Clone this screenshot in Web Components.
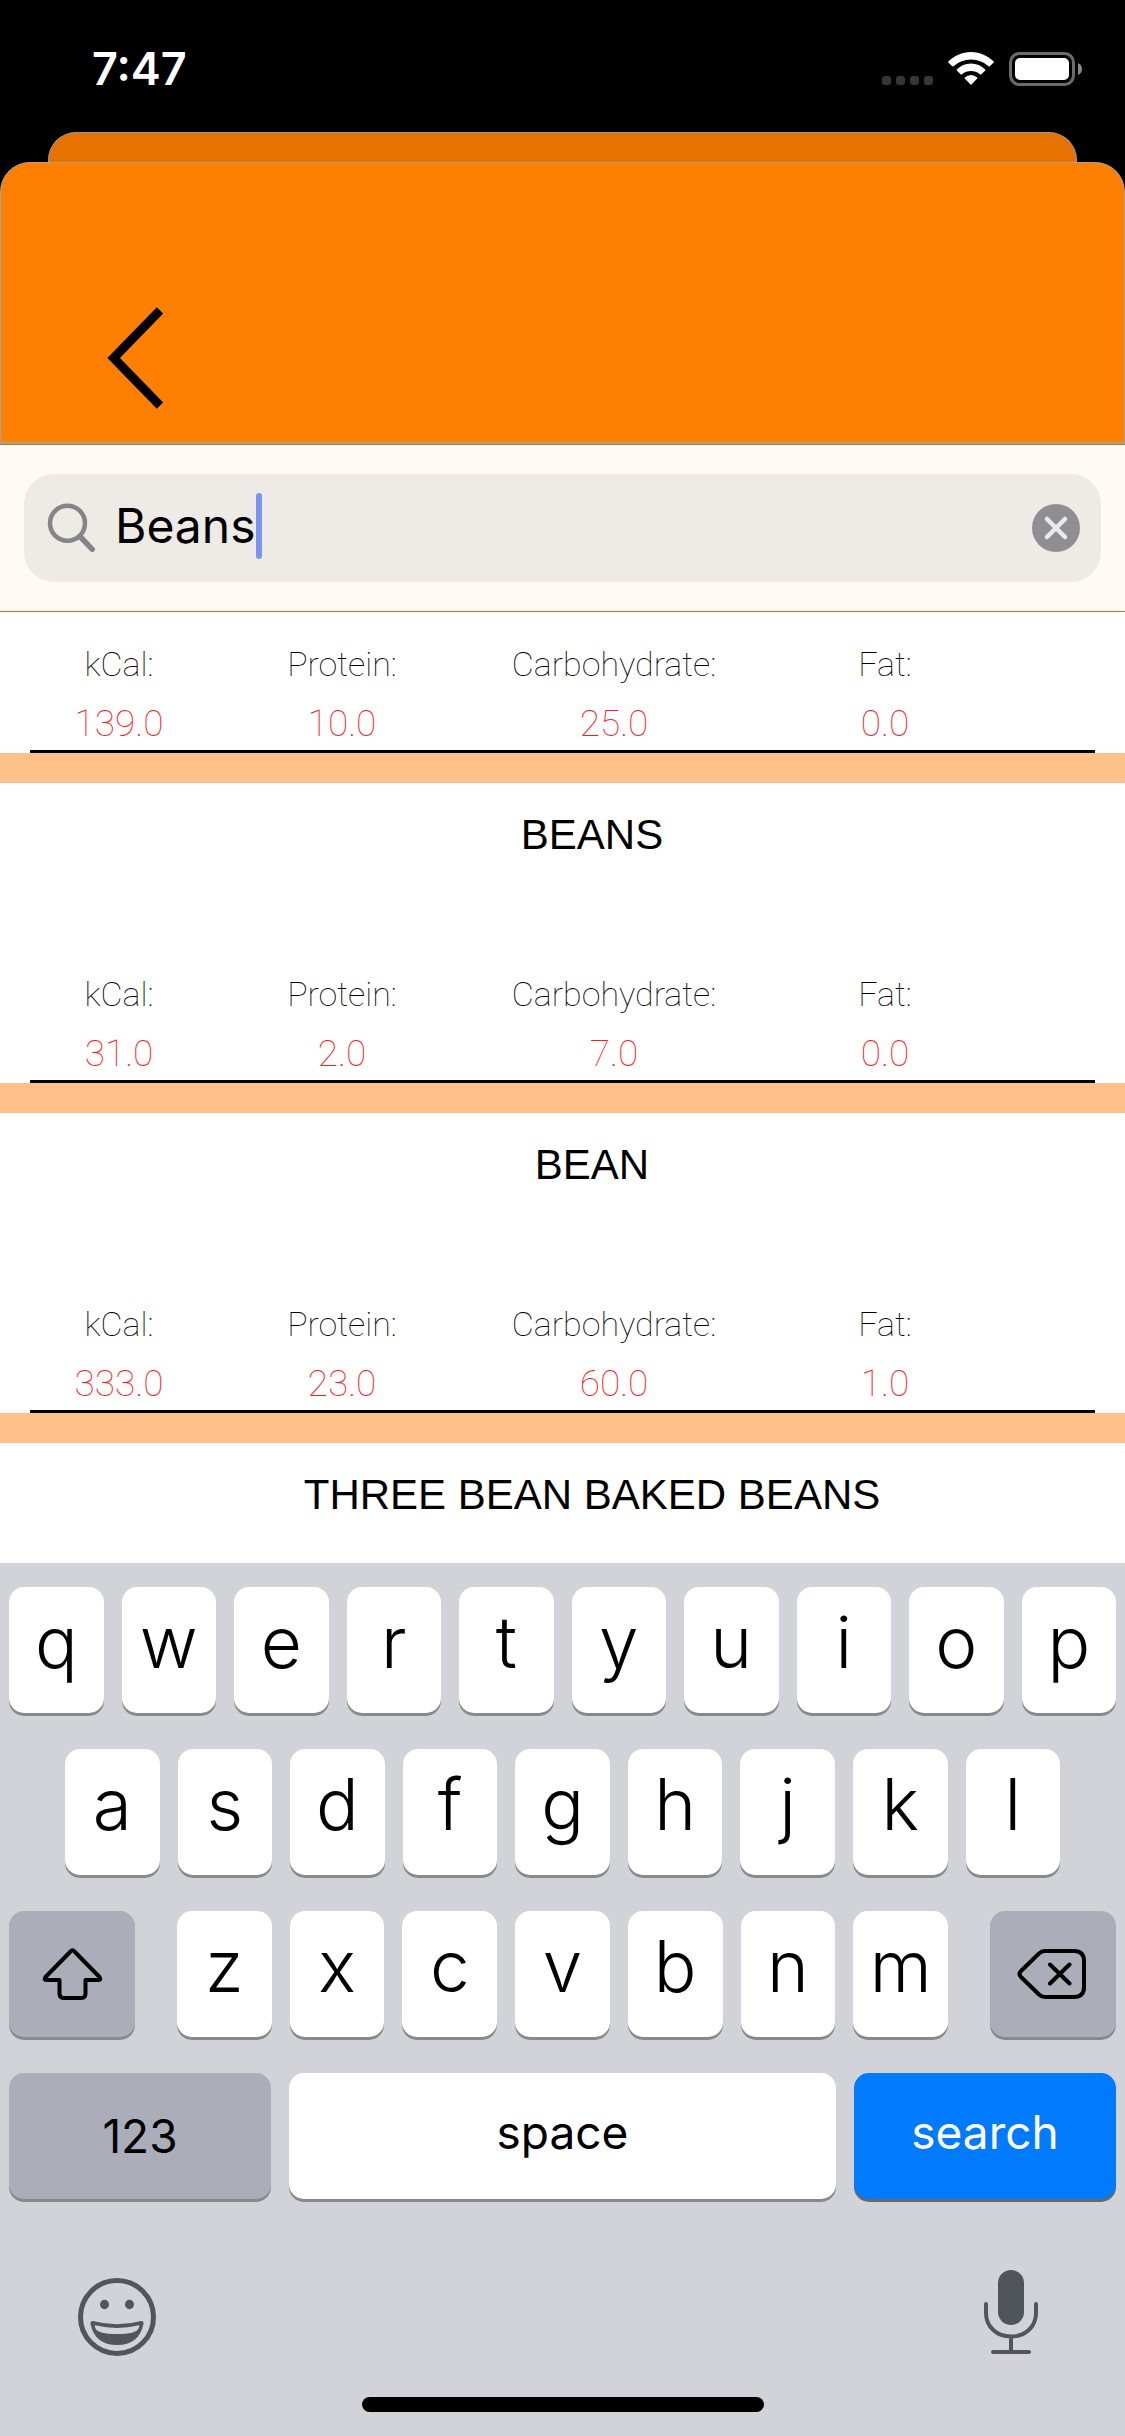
<!DOCTYPE html>
<html lang="en">
<head>
<meta charset="utf-8">
<meta name="viewport" content="width=device-width, initial-scale=1">
<title>Food search</title>
<style>
  html, body { margin: 0; }
  body { background: #000; font-family: Inter, "Liberation Sans", sans-serif; }
</style>
</head>
<body>
<food-search-app></food-search-app>
<script>
const define = (name, html, setup) => {
  const tpl = document.createElement('template');
  tpl.innerHTML = html;
  customElements.define(name, class extends HTMLElement {
    constructor() {
      super();
      this.attachShadow({ mode: 'open' });
    }
    connectedCallback() {
      if (this.shadowRoot.childNodes.length) return;
      this.shadowRoot.append(tpl.content.cloneNode(true));
      if (setup) setup(this, this.shadowRoot);
    }
  });
};

define('status-bar', `
<style>
  :host { display: flex; justify-content: space-between; align-items: center; height: 132px; padding: 6px 42px 0 92px; box-sizing: border-box; color: #fff; }
  time { font-size: 45px; line-height: 52px; font-weight: 600; }
  .icons { display: flex; align-items: center; }
  svg { display: block; }
</style>
<time>7:47</time>
<div class="icons">
  <svg width="202" height="36" viewBox="881 51 202 36" role="img" aria-label="No signal, Wi-Fi connected, battery full">
    <g fill="#363636"><rect x="882" y="76" width="9" height="9" rx="3"/><rect x="896" y="76" width="9" height="9" rx="3"/><rect x="910" y="76" width="9" height="9" rx="3"/><rect x="924" y="76" width="9" height="9" rx="3"/></g>
    <g fill="#fff">
      <path d="M971 52C962 52 954 56 948.300 61.500Q948 62 948.300 62.500L952.300 66.300Q953 66.600 953.500 66.200Q961 59.500 971 59.500T988.500 66.200Q989 66.600 989.700 66.300L993.700 62.500Q994 62 993.700 61.500C988 56 980 52 971 52Z"/>
      <path d="M971 63.500C965.500 63.500 960.500 65.700 956.800 69.500Q956.500 70 956.800 70.500L960.800 74.500Q961.500 74.800 962 74.300Q966 71 971 71T980 74.300Q980.500 74.800 981.200 74.500L985.200 70.500Q985.500 70 985.200 69.500C981.500 65.700 976.500 63.500 971 63.500Z"/>
      <path d="M971 75Q967.500 75 964.800 77.600Q964.300 78 964.800 78.600L970.500 84.600Q971 85.100 971.500 84.600L977.200 78.600Q977.700 78 977.200 77.600Q974.500 75 971 75Z"/>
    </g>
    <rect x="1010.500" y="53.500" width="63" height="31" rx="9" fill="none" stroke="#6b6b6b" stroke-width="3"/>
    <rect x="1015" y="58" width="54" height="22" rx="5" fill="#fff"/>
    <path d="M1078 63Q1082 65 1082 69T1078 75Z" fill="#8a8a8a"/>
  </svg>
</div>`);

define('sheet-header', `
<style>
  :host { display: block; }
  .behind { height: 30px; margin: 0 48px; box-sizing: border-box; background: #e67200; border: 1px solid #999; border-bottom: 0; border-radius: 28px 28px 0 0; }
  header { height: 282px; box-sizing: border-box; padding: 134px 60px 0 89px; background: #ff8000; border: 1px solid #a6a09a; border-bottom-width: 2px; border-radius: 30px 30px 0 0; }
  button { display: block; border: 0; padding: 0; background: none; }
  svg { display: block; }
</style>
<div class="behind"></div>
<header>
  <button type="button" aria-label="Back"><svg width="90" height="120" viewBox="90 297 90 120"><path d="M160 310.300L113.600 358L160 405.700" fill="none" stroke="#000" stroke-width="9"/></svg></button>
</header>`);

define('search-field', `
<style>
  :host { display: block; background: #fffaf5; border: solid #c4761c; border-width: 1px 0; padding: 29px 24px; }
  .field { display: flex; align-items: center; height: 108px; padding: 0 21px 0 23px; box-sizing: border-box; background: #eeebe6; border-radius: 30px; }
  label { display: flex; flex: 1; align-items: center; min-width: 0; }
  svg { display: block; }
  .lens { margin-right: 18px; }
  .entry { display: flex; align-items: center; padding-bottom: 4px; }
  input { field-sizing: content; border: 0; outline: 0; padding: 0; margin: 0; background: none; color: #000; font: 400 48px/60px Inter, "Liberation Sans", sans-serif; }
  .caret { width: 6px; height: 66px; border-radius: 3px; background: #7c94f0; }
  button { border: 0; padding: 0; background: none; }
</style>
<div class="field">
  <label><svg class="lens" width="50" height="50" viewBox="47 502 50 50" aria-hidden="true"><g fill="none" stroke="#858588" stroke-linecap="round"><circle cx="67.500" cy="522.300" r="17.500" stroke-width="4.500"/><path d="M80.500 536L92.300 548.300" stroke-width="5.500"/></g></svg><span class="entry"><input type="text" value="Beans" aria-label="Search foods"><span class="caret"></span></span></label>
  <button type="button" aria-label="Clear text"><svg width="48" height="48" viewBox="0 0 48 48"><circle cx="24" cy="24" r="24" fill="#8e8e93"/><path d="M15 15L33 33M33 15L15 33" stroke="#eeebe6" stroke-width="4.500" stroke-linecap="round"/></svg></button>
</div>`);

define('food-card', `
<style>
  :host { display: flex; flex: none; flex-direction: column; min-height: 300px; box-sizing: border-box; background: #fff; }
  :host([part-shown]) { min-height: 141px; }
  h2 { margin: 0; padding: 28px 0 0 59px; font: 400 42px/48px "Liberation Sans", Arial, sans-serif; text-align: center; color: #000; }
  dl { display: grid; grid-template-columns: 238fr 208fr 336fr 206fr 137fr; margin: auto 0 0; font: 100 37px/52px Roboto, "Liberation Sans", sans-serif; text-align: center; }
  dl div { display: flex; flex-direction: column; gap: 8px; }
  dt { color: #000; font-size: 34px; }
  dd { margin: 0; color: #ff1a1a; }
  hr { width: auto; height: 3px; margin: 0 30px; border: 0; background: #000; }
</style>`, (host, root) => {
  const name = host.getAttribute('name');
  if (name) {
    const h = document.createElement('h2');
    h.textContent = name;
    root.append(h);
  }
  const values = host.getAttribute('values');
  if (!values) return;
  const dl = document.createElement('dl');
  const labels = ['kCal:', 'Protein:', 'Carbohydrate:', 'Fat:'];
  values.split(' ').forEach((v, i) => {
    const cell = document.createElement('div');
    const dt = document.createElement('dt');
    const dd = document.createElement('dd');
    dt.textContent = labels[i];
    dd.textContent = v;
    cell.append(dt, dd);
    dl.append(cell);
  });
  root.append(dl, document.createElement('hr'));
});

define('food-list', `
<style>
  :host { display: flex; flex: 1 1 0; flex-direction: column; gap: 30px; min-height: 0; overflow: hidden; background: #ffc18a; }
</style>
<slot></slot>`);

define('key-cap', `
<style>
  :host { display: flex; flex: 1 1 0; min-width: 0; }
  :host([kind=mod]) { flex: 0 0 126px; }
  :host([kind=wide]), :host([kind=go]) { flex: 0 0 262px; }
  button { flex: 1; min-width: 0; height: 126px; margin: 0; border: 0; padding: 0 0 16px; border-radius: 15px; background: #fff; box-shadow: 0 3px 0 #88898d; color: #000; font: 350 71px/88px Inter, "Liberation Sans", sans-serif; }
  :host([kind]) button { padding: 0; font-size: 46px; line-height: 56px; font-weight: 400; }
  :host([kind=mod]) button, :host([kind=wide]) button { background: #abaeb8; }
  :host([kind=space]) button, :host([kind=go]) button { padding-bottom: 8px; }
  :host([kind=go]) button { background: #007aff; color: #fff; box-shadow: 0 3px 0 #66696f; }
  ::slotted(svg) { display: block; margin: 0 auto; }
</style>
<button type="button"><slot></slot></button>`, (host, root) => {
  const label = host.getAttribute('label');
  if (label) root.querySelector('button').setAttribute('aria-label', label);
});

define('key-row', `
<style>
  :host { display: flex; gap: 18px; }
  :host([inset]) { padding: 0 56px; }
  :host([split]) { gap: 42px; }
  :host([group]) { flex: 1; }
</style>
<slot></slot>`, host => {
  const keys = host.getAttribute('keys');
  if (!keys) return;
  for (const k of keys) {
    const cap = document.createElement('key-cap');
    cap.textContent = k;
    host.append(cap);
  }
});

define('screen-keyboard', `
<style>
  :host { display: block; padding: 24px 9px; background: #d1d3d8; }
  .rows { display: flex; flex-direction: column; gap: 36px; }
  .tools { display: flex; justify-content: space-between; padding: 69px 60px 39px; }
  .tools button { border: 0; padding: 0; background: none; }
  svg { display: block; }
  .home { width: 402px; height: 15px; margin: 0 auto; border-radius: 8px; background: #000; }
</style>
<div class="rows">
  <key-row keys="qwertyuiop"></key-row>
  <key-row inset keys="asdfghjkl"></key-row>
  <key-row split>
    <key-cap kind="mod" label="Shift"><svg width="66" height="60" viewBox="39 1944 66 60"><path d="M70.500 1951.500Q72.500 1949 74.500 1951.500L99.500 1977Q101.500 1980 98.500 1980H85.500V1993.500Q85.500 1998 81.500 1998H63.500Q59.500 1998 59.500 1993.500V1980H46.500Q43.500 1980 45.500 1977Z" fill="none" stroke="#000" stroke-width="4" stroke-linejoin="round"/></svg></key-cap>
    <key-row group keys="zxcvbnm"></key-row>
    <key-cap kind="mod" label="Delete"><svg width="78" height="60" viewBox="1014 1944 78 60"><path d="M1045 1951H1074Q1084 1951 1084 1961V1987Q1084 1997 1074 1997H1045Q1041.500 1997 1039 1994.500L1021 1977Q1018 1974 1021 1971L1039 1953.500Q1041.500 1951 1045 1951ZM1050 1964.500L1069.500 1983.500M1069.500 1964.500L1050 1983.500" fill="none" stroke="#000" stroke-width="4" stroke-linejoin="round" stroke-linecap="round"/></svg></key-cap>
  </key-row>
  <key-row>
    <key-cap kind="wide">123</key-cap>
    <key-cap kind="space">space</key-cap>
    <key-cap kind="go">search</key-cap>
  </key-row>
</div>
<div class="tools">
  <button type="button" aria-label="Emoji"><svg width="90" height="90" viewBox="0 0 90 90"><circle cx="48" cy="49" r="36.500" fill="none" stroke="#50565c" stroke-width="5"/><g fill="#50565c"><ellipse cx="35.500" cy="36.500" rx="4.500" ry="4.700"/><ellipse cx="60.500" cy="36.500" rx="4.500" ry="4.700"/><path fill-rule="evenodd" d="M24 53Q48 59.500 72 53Q75 53 74.500 56Q70 77 48 77T21.500 56Q21 53 24 53ZM26 57.300Q25 57.800 26.500 60.500Q29 66 48 66T69.500 60.500Q71 57.800 70 57.300Q48 62.500 26 57.300Z"/></g></svg></button>
  <button type="button" aria-label="Dictate"><svg width="90" height="90" viewBox="966 2268 90 90"><rect x="998" y="2270" width="26" height="55" rx="13" fill="#50555c"/><path d="M986 2304V2313C986 2327 997 2336.500 1011 2336.500S1036 2327 1036 2313V2304M1011 2337V2352M993 2352H1029" fill="none" stroke="#50565c" stroke-width="4" stroke-linecap="round"/></svg></button>
</div>
<div class="home"></div>`);

define('food-search-app', `
<style>
  :host { display: flex; flex-direction: column; height: 100vh; min-height: 1600px; background: #000; }
</style>
<status-bar></status-bar>
<sheet-header></sheet-header>
<search-field></search-field>
<food-list>
  <food-card part-shown values="139.0 10.0 25.0 0.0"></food-card>
  <food-card name="BEANS" values="31.0 2.0 7.0 0.0"></food-card>
  <food-card name="BEAN" values="333.0 23.0 60.0 1.0"></food-card>
  <food-card name="THREE BEAN BAKED BEANS"></food-card>
</food-list>
<screen-keyboard></screen-keyboard>`);
</script>
</body>
</html>
